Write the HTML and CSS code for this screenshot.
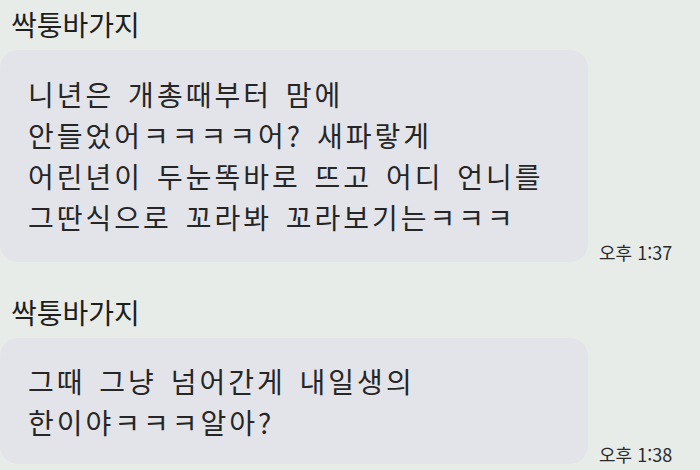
FILE: index.html
```html
<!DOCTYPE html>
<html lang="ko">
<head>
    <meta charset="UTF-8">
    <meta name="viewport" content="width=device-width, initial-scale=1.0">
    <title>채팅</title>
    <link rel="stylesheet" href="styles.css">
</head>
<body>
    <div class="chat">
        <div class="msg-group">
            <div class="sender">싹퉁바가지</div>
            <div class="msg-row">
                <div class="bubble">
                    <p>니년은 개총때부터 맘에</p>
                    <p>안들었어ㅋㅋㅋㅋ어? 새파랗게</p>
                    <p>어린년이 두눈똑바로 뜨고 어디 언니를</p>
                    <p>그딴식으로 꼬라봐 꼬라보기는ㅋㅋㅋ</p>
                </div>
                <div class="time">오후 1:37</div>
            </div>
        </div>

        <div class="msg-group">
            <div class="sender">싹퉁바가지</div>
            <div class="msg-row">
                <div class="bubble bubble-short">
                    <p>그때 그냥 넘어간게 내일생의</p>
                    <p>한이야ㅋㅋㅋ알아?</p>
                </div>
                <div class="time">오후 1:38</div>
            </div>
        </div>
    </div>
</body>
</html>
```

FILE: styles.css
```css
* {
    margin: 0;
    padding: 0;
    box-sizing: border-box;
    font-family: 'Noto Sans CJK KR', 'Noto Sans', sans-serif;
}

body {
    background-color: #E8ECE9;
    color: #222222;
    width: 700px;
    height: 470px;
    overflow: hidden;
}

.chat {
    display: flex;
    flex-direction: column;
    gap: 35px;
    padding-top: 9px;
}

.sender {
    font-size: 28px;
    line-height: 30px;
    padding-left: 11px;
    margin-bottom: 11px;
    color: #1E1E1E;
}

.msg-row {
    display: flex;
    align-items: flex-end;
}

.bubble {
    width: 588px;
    background-color: #E3E4E9;
    border-radius: 18px;
    padding: 24px 12px 24px 28px;
    font-size: 28px;
    line-height: 41px;
    letter-spacing: 3px;
    word-spacing: 3px;
    color: #262626;
    white-space: nowrap;
}

.bubble-short {
    padding: 23px 12px 21px 28px;
}

.time {
    font-size: 18px;
    line-height: 20px;
    margin-left: 11px;
    color: #2A2A2A;
}
```
